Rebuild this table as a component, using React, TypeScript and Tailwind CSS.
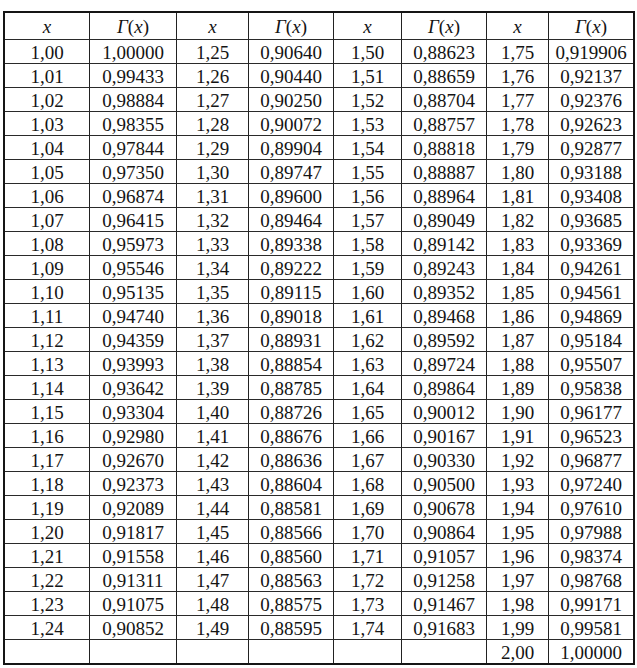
import React from "react";

const g1 = ["1,00000","0,99433","0,98884","0,98355","0,97844","0,97350","0,96874","0,96415","0,95973","0,95546","0,95135","0,94740","0,94359","0,93993","0,93642","0,93304","0,92980","0,92670","0,92373","0,92089","0,91817","0,91558","0,91311","0,91075","0,90852"];
const g2 = ["0,90640","0,90440","0,90250","0,90072","0,89904","0,89747","0,89600","0,89464","0,89338","0,89222","0,89115","0,89018","0,88931","0,88854","0,88785","0,88726","0,88676","0,88636","0,88604","0,88581","0,88566","0,88560","0,88563","0,88575","0,88595"];
const g3 = ["0,88623","0,88659","0,88704","0,88757","0,88818","0,88887","0,88964","0,89049","0,89142","0,89243","0,89352","0,89468","0,89592","0,89724","0,89864","0,90012","0,90167","0,90330","0,90500","0,90678","0,90864","0,91057","0,91258","0,91467","0,91683"];
const g4 = ["0,919906","0,92137","0,92376","0,92623","0,92877","0,93188","0,93408","0,93685","0,93369","0,94261","0,94561","0,94869","0,95184","0,95507","0,95838","0,96177","0,96523","0,96877","0,97240","0,97610","0,97988","0,98374","0,98768","0,99171","0,99581"];

const fx = (base: number, i: number) => {
  const v = base + i;
  const whole = Math.floor(v / 100);
  const frac = (v % 100).toString().padStart(2, "0");
  return `${whole},${frac}`;
};

const rows: string[][] = g1.map((_, i) => [
  fx(100, i), g1[i], fx(125, i), g2[i], fx(150, i), g3[i], fx(175, i), g4[i],
]);
rows.push(["", "", "", "", "", "", "2,00", "1,00000"]);

function HeaderX() {
  return <span className="italic">x</span>;
}
function HeaderG() {
  return (
    <span>
      <span className="italic">Γ</span>(<span className="italic">x</span>)
    </span>
  );
}

export default function App() {
  return (
    <div className="w-[637px] h-[668px] bg-white pt-[11px] pl-[3px] text-[#141414]" style={{ fontFamily: '"Liberation Serif", "Times New Roman", serif' }}>
      <div className="w-[632px] border-2 border-[#151515] grid grid-cols-[84px_87px_72px_85px_68px_85px_62px_85px] text-[19px] leading-none">
        {[0, 1, 2, 3, 4, 5, 6, 7].map((c) => (
          <div
            key={`h${c}`}
            className={`h-[26px] pt-[1px] flex items-center justify-center ${c > 0 ? "border-l border-[#222222]" : ""}`}
          >
            {c % 2 === 0 ? <HeaderX /> : <HeaderG />}
          </div>
        ))}
        {rows.map((r, ri) =>
          r.map((cell, c) => (
            <div
              key={`${ri}-${c}`}
              className={`h-[24px] pt-[2px] flex items-center justify-center border-t border-[#2a2a2a] ${c > 0 ? "border-l border-l-[#222222]" : ""}`}
            >
              {cell}
            </div>
          ))
        )}
      </div>
    </div>
  );
}
